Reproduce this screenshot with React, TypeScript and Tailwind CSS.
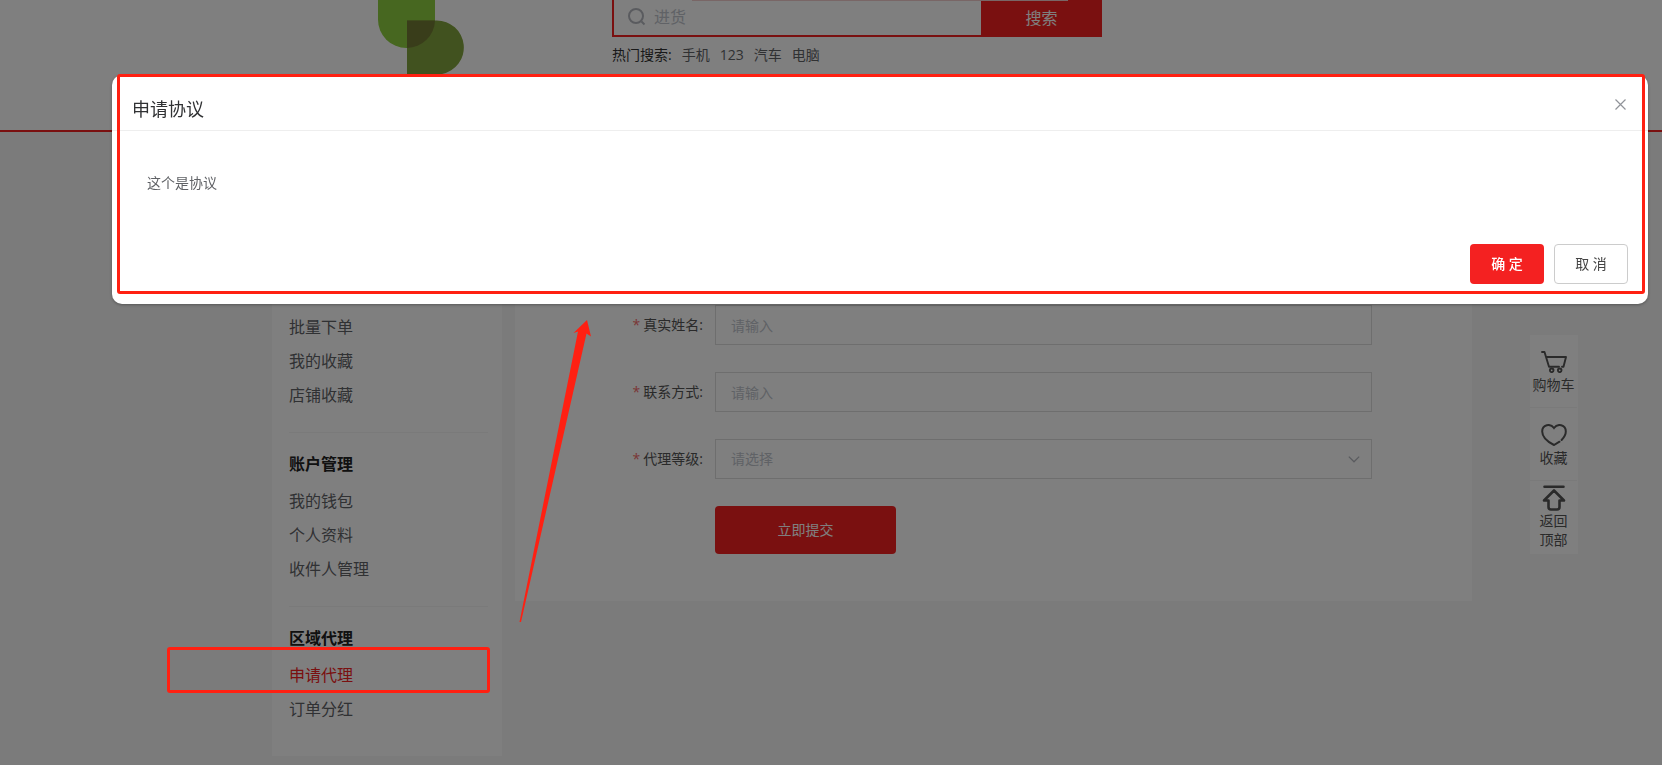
import React from 'react';

const groups = [
  { title: '', items: ['批量下单', '我的收藏', '店铺收藏'] },
  { title: '账户管理', items: ['我的钱包', '个人资料', '收件人管理'] },
  { title: '区域代理', items: ['申请代理', '订单分红'] },
];

const hotWords = ['手机', '123', '汽车', '电脑'];

const Logo = () => (
  <svg className="ml-[378px] h-[76px] w-[86px] shrink-0" viewBox="0 0 86 76" aria-hidden="true">
    <path d="M0 0H57V19.500A28.500 28.500 0 0 1 0 19.500Z" fill="#8ecf40" />
    <path d="M29 20.500H58.500A27 27 0 0 1 64 74H29Z" fill="#82a43e" />
    <path d="M29 20.500H57A28.500 28.500 0 0 1 29 48Z" fill="#727a34" />
  </svg>
);

const Header = () => (
  <header className="flex h-[132px] border-b-2 border-[#f42121] bg-white">
    <Logo />
    <div className="ml-[148px] w-[490px]">
      <form className="relative flex h-[37px]" onSubmit={(e) => e.preventDefault()}>
        <label className="flex min-w-0 flex-1 items-center gap-[7px] border-b-2 border-l-2 border-[#f42121] pb-[2px] pl-[13px]">
          <svg className="size-5 shrink-0" viewBox="0 0 20 20" fill="none" stroke="#b4b7be" strokeWidth="2" aria-hidden="true">
            <circle cx="9" cy="9" r="7" />
            <path d="M14.500 14.500L17.500 17.500" />
          </svg>
          <input
            type="text"
            aria-label="搜索商品"
            placeholder="进货"
            className="min-w-0 flex-1 bg-transparent text-base outline-none placeholder:text-[#c0c4cc]"
          />
        </label>
        <button type="submit" className="w-[121px] bg-[#f42121] pb-[2px] text-base text-white">搜索</button>
        <div className="absolute top-0 right-[34px] left-20 h-px bg-[#f3cccc]" />
      </form>
      <div className="mt-2 flex gap-[10px] text-sm leading-5 text-[#606266]">
        <span className="text-[#333]">热门搜索:</span>
        {hotWords.map((w) => (
          <a key={w} href="#">{w}</a>
        ))}
      </div>
    </div>
  </header>
);

const Sidebar = () => (
  <aside className="w-[230px] shrink-0 bg-white pt-[158px] pr-[14px] pb-[10px] pl-[17px] text-base">
    {groups.map((g, i) => (
      <section key={i} className={i ? 'border-t border-[#f5f5f5] pt-[11px] pb-5' : 'pb-5'}>
        {g.title && <h3 className="h-10 leading-10 font-bold text-[#222]">{g.title}</h3>}
        <ul>
          {g.items.map((item) => (
            <li key={item} className="h-[34px] leading-[34px]">
              <a href="#" className={item === '申请代理' ? 'text-[#f42121]' : 'text-[#606266]'}>{item}</a>
            </li>
          ))}
        </ul>
      </section>
    ))}
  </aside>
);

const FieldLabel = ({ id, text }: { id: string; text: string }) => (
  <label htmlFor={id} className="w-[200px] shrink-0 pr-3 text-right text-[#555]">
    <span className="mr-[3px] text-[#f56c6c]">*</span>
    {text}:
  </label>
);

const fieldClass =
  'h-10 w-full appearance-none border border-[#dcdcdc] bg-white px-[15px] text-sm text-[#c0c4cc] outline-none placeholder:text-[#c0c4cc]';

const AgentForm = () => (
  <main className="min-w-0 flex-1 self-start bg-white pt-[153px] pr-[100px] pb-[47px] text-sm">
    <form onSubmit={(e) => e.preventDefault()}>
      <div className="mb-[27px] flex items-center">
        <FieldLabel id="name" text="真实姓名" />
        <input id="name" type="text" placeholder="请输入" className={fieldClass} />
      </div>
      <div className="mb-[27px] flex items-center">
        <FieldLabel id="contact" text="联系方式" />
        <input id="contact" type="text" placeholder="请输入" className={fieldClass} />
      </div>
      <div className="mb-[27px] flex items-center">
        <FieldLabel id="level" text="代理等级" />
        <div className="relative flex-1">
          <select id="level" className={fieldClass}>
            <option>请选择</option>
          </select>
          <svg className="pointer-events-none absolute top-[17px] right-3 h-[7px] w-3" viewBox="0 0 12 7" fill="none" stroke="#b4b7be" strokeWidth="1.300" aria-hidden="true">
            <path d="M0.800 0.600L6 5.800L11.200 0.600" />
          </svg>
        </div>
      </div>
      <button type="submit" className="ml-[200px] h-12 w-[181px] rounded bg-[#f42121] text-white">立即提交</button>
    </form>
  </main>
);

const FloatBar = () => (
  <nav className="fixed top-[335px] right-[84px] w-12 divide-y divide-[#f5f5f5] bg-white pr-px text-center text-sm leading-[19px] text-[#555]">
    <a href="#" className="flex h-[73px] flex-col items-center pt-4">
      <svg className="mb-[2px] h-[22px] w-[26px] shrink-0" viewBox="0 0 26 22" fill="none" stroke="currentColor" strokeWidth="1.900" strokeLinecap="round" strokeLinejoin="round">
        <path d="M1 1H3.500L8 15.700H18M5 6H25L22.500 15.700H21" />
        <circle cx="10.700" cy="19.300" r="1.800" />
        <circle cx="18.700" cy="19.300" r="1.800" />
      </svg>
      <span className="whitespace-nowrap">购物车</span>
    </a>
    <a href="#" className="flex h-[73px] flex-col items-center pt-4">
      <svg className="mb-[2px] h-[22px] w-[26px] shrink-0" viewBox="0 0 26 22" fill="none" stroke="currentColor" strokeWidth="2" strokeLinecap="round">
        <path d="M18.500 17.700L13 21C8 18.500 1.200 13.500 1.200 7.500C1.200 0.500 9.500 -1 13 4C16.500 -1 24.800 0.500 24.800 7.500C24.800 10.500 23 13.500 20.600 16" />
      </svg>
      收藏
    </a>
    <a href="#" className="flex h-[73px] flex-col items-center pt-1">
      <svg className="h-[26px] w-6 shrink-0" viewBox="0 0 24 26" fill="none" stroke="currentColor" strokeWidth="2.600" strokeLinecap="round" strokeLinejoin="round">
        <path d="M2.500 1.800H21.500M12 5.500L22 15.500H17.500V22Q17.500 24.500 15 24.500H9Q6.500 24.500 6.500 22V15.500H2Z" />
      </svg>
      <span className="w-7">返回顶部</span>
    </a>
  </nav>
);

const AgreementDialog = () => (
  <div
    role="dialog"
    aria-modal="true"
    aria-labelledby="dialog-title"
    className="absolute top-[75px] right-[14px] left-28 rounded-[10px] bg-white shadow-[0_1px_3px_rgba(0,0,0,0.3)]"
  >
    <div className="flex h-14 items-start justify-between border-b border-[#eee] px-5 pt-5">
      <h2 id="dialog-title" className="text-lg leading-7 text-[#303133]">申请协议</h2>
      <button type="button" aria-label="关闭" className="pt-1 pr-[2px] text-[#909399]">
        <svg className="size-[11px]" viewBox="0 0 11 11" fill="none" stroke="currentColor" strokeWidth="1.200">
          <path d="M0.500 0.500L10.500 10.500M10.500 0.500L0.500 10.500" />
        </svg>
      </button>
    </div>
    <p className="px-[35px] pt-10 text-sm leading-6 text-[#606266]">这个是协议</p>
    <div className="flex justify-end gap-[10px] px-5 pt-[49px] pb-5 text-sm">
      <button type="button" className="h-10 w-[74px] rounded bg-[#f42121] font-medium text-white">确 定</button>
      <button type="button" className="h-10 w-[74px] rounded border border-[#ccc] bg-white text-[#444]">取 消</button>
    </div>
    <div className="pointer-events-none absolute -top-px right-[3px] bottom-[10px] left-[5px] rounded-[3px] border-3 border-[#ff2012]" />
  </div>
);

const App: React.FC = () => {
  return (
    <div
      lang="zh-CN"
      className="relative min-h-screen overflow-hidden bg-[#f7f7f7] font-['Open_Sans','Noto_Sans_CJK_SC',sans-serif]"
    >
      <Header />
      <div className="flex gap-[13px] pt-5 pr-[190px] pb-[10px] pl-[272px]">
        <Sidebar />
        <AgentForm />
      </div>
      <FloatBar />

      {/* Mask and dialog */}
      <div className="fixed inset-0 bg-black/50" />
      <AgreementDialog />

      {/* Marker and arrow */}
      <div className="pointer-events-none absolute top-[647px] left-[167px] h-[46px] w-[323px] rounded-[3px] border-3 border-[#ff2012]" />
      <svg className="pointer-events-none absolute top-[319px] left-[518px] h-[305px] w-[76px]" viewBox="0 0 76 305" aria-hidden="true">
        <path d="M1.500 303L60 12.500L55.500 14L69 1L73 17.500L68.500 14.500L3 303Z" fill="#ff2012" />
      </svg>
    </div>
  );
};

export default App;
